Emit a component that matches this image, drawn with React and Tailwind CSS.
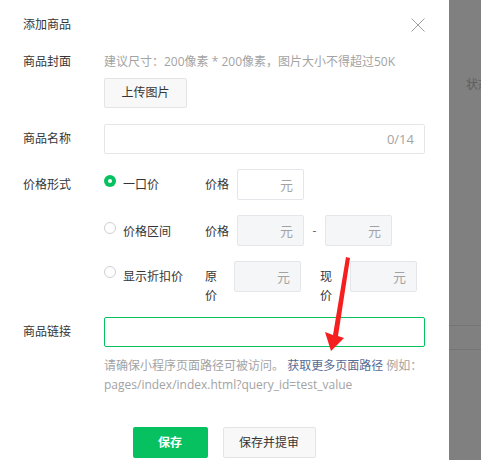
import React from "react";

function Radio({ checked }) {
  if (checked) {
    return (
      <div className="w-[12px] h-[12px] rounded-full bg-[#07c160] flex items-center justify-center shrink-0">
        <div className="w-[4px] h-[4px] rounded-full bg-white" />
      </div>
    );
  }
  return <div className="w-[12px] h-[12px] rounded-full border border-[#cfcfd4] bg-white shrink-0" />;
}

function YuanInput({ disabled }) {
  return (
    <div
      className={
        "w-[67px] h-[31px] rounded-[2px] border border-[#e4e6ea] flex items-center justify-end pr-[10px] text-[13px] text-[#a3a3a3] shrink-0 " +
        (disabled ? "bg-[#f5f6f8]" : "bg-white")
      }
    >
      元
    </div>
  );
}

export default function App() {
  return (
    <div className="relative flex w-[481px] h-[460px] overflow-hidden bg-white font-['Open_Sans','Noto_Sans_CJK_SC',sans-serif] text-[12px] leading-[16px] text-[#353535]">
      {/* modal */}
      <div className="w-[449px] shrink-0 pl-[23px] pr-[24px] pt-[17px] flex flex-col">
        <div className="flex items-center justify-between">
          <span className="leading-[16px]">添加商品</span>
          <svg width="14" height="14" viewBox="0 0 14 14">
            <path d="M0.5 0.5 L13.5 13.5 M13.5 0.5 L0.5 13.5" stroke="#a0a0a0" strokeWidth="1" fill="none" />
          </svg>
        </div>

        {/* cover */}
        <div className="flex mt-[21px]">
          <div className="w-[81px] shrink-0">商品封面</div>
          <div className="flex flex-col">
            <div className="text-[#a3a3a3]">建议尺寸：200像素 * 200像素，图片大小不得超过50K</div>
            <div className="mt-[8px] w-[83px] h-[30px] rounded-[2px] border border-[#e4e4e4] bg-[#f8f8f8] flex items-center justify-center text-[#353535]">
              上传图片
            </div>
          </div>
        </div>

        {/* name */}
        <div className="flex items-center mt-[16px]">
          <div className="w-[81px] shrink-0">商品名称</div>
          <div className="flex-1 h-[30px] rounded-[2px] border border-[#e4e6ea] flex items-center justify-end pr-[10px] text-[13px] text-[#a3a3a3]">
            0/14
          </div>
        </div>

        {/* price */}
        <div className="flex mt-[15px]">
          <div className="w-[81px] shrink-0 pt-[8px]">价格形式</div>
          <div className="flex flex-col">
            <div className="flex items-start h-[30px]">
              <div className="mt-[6px]"><Radio checked /></div>
              <div className="ml-[7px] w-[82px] mt-[8px]">一口价</div>
              <div className="w-[32px] mt-[8px]">价格</div>
              <YuanInput />
            </div>
            <div className="flex items-start mt-[16px]">
              <div className="mt-[7px]"><Radio /></div>
              <div className="ml-[7px] w-[82px] mt-[9px]">价格区间</div>
              <div className="w-[32px] mt-[9px]">价格</div>
              <YuanInput disabled />
              <div className="w-[21px] text-center mt-[8px] text-[#666]">-</div>
              <YuanInput disabled />
            </div>
            <div className="flex items-start mt-[15px]">
              <div className="mt-[5px]"><Radio /></div>
              <div className="ml-[7px] w-[82px] mt-[8px]">显示折扣价</div>
              <div className="w-[12px] mt-[6px] leading-[19px]">原价</div>
              <div className="ml-[17px]"><YuanInput disabled /></div>
              <div className="ml-[19px] w-[12px] mt-[6px] leading-[19px]">现价</div>
              <div className="ml-[18px]"><YuanInput disabled /></div>
            </div>
          </div>
        </div>

        {/* link */}
        <div className="flex items-center mt-[12px]">
          <div className="w-[81px] shrink-0">商品链接</div>
          <div className="flex-1 h-[30px] rounded-[2px] border border-[#07c160] bg-white" />
        </div>
        <div className="ml-[81px] mt-[9px] leading-[19px] text-[#a3a3a3]">
          请确保小程序页面路径可被访问。 <span className="text-[#576b95]">获取更多页面路径</span> 例如：
          <br />
          pages/index/index.html?query_id=test_value
        </div>

        {/* buttons */}
        <div className="flex justify-center gap-[15px] mt-[33px]">
          <div className="w-[75px] h-[31px] rounded-[2px] bg-[#07c160] text-white font-bold flex items-center justify-center">
            保存
          </div>
          <div className="w-[93px] h-[31px] rounded-[2px] border border-[#e4e4e4] bg-[#f8f8f8] flex items-center justify-center text-[#353535]">
            保存并提审
          </div>
        </div>
      </div>

      {/* dimmed page behind */}
      <div className="flex-1 bg-[#808080] flex flex-col overflow-hidden">
        <div className="mt-[77px] ml-[17px] text-[#5e5e5e] whitespace-nowrap">状态</div>
        <div className="mt-[232px] border-t border-[#747474]" />
        <div className="mt-[23px] border-t border-[#747474]" />
      </div>

      {/* red annotation arrow */}
      <svg className="absolute left-0 top-0 pointer-events-none" width="481" height="460">
        <polygon
          points="346,257 350,258 338,336 344,338 331,351 325,332 333,335"
          fill="#f51f1f"
        />
      </svg>
    </div>
  );
}
